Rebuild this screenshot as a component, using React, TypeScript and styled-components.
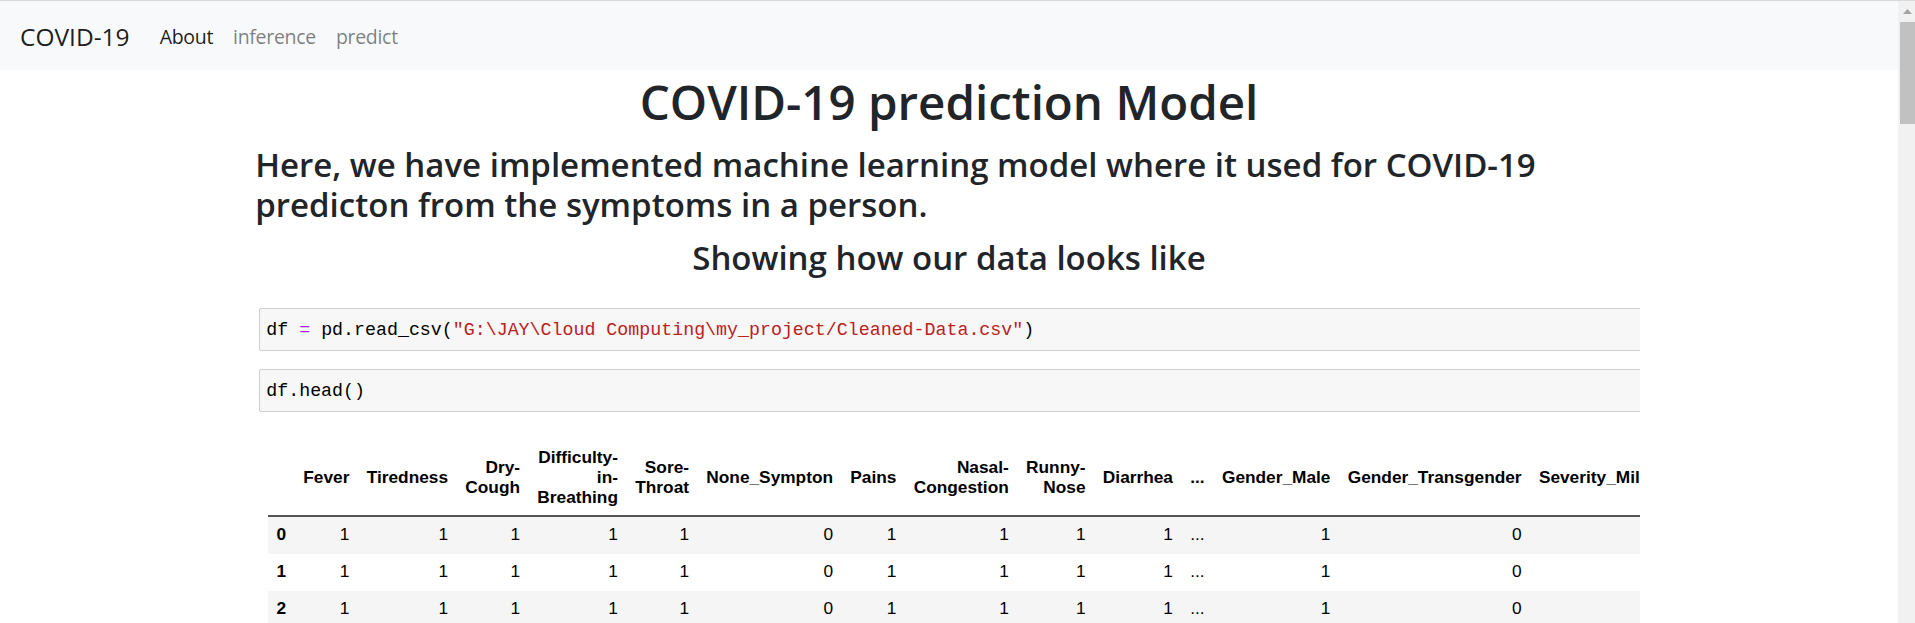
import React from "react";
import styled, { createGlobalStyle } from "styled-components";

const GlobalStyle = createGlobalStyle`
  html, body {
    margin: 0;
    padding: 0;
    height: 100%;
    overflow: hidden;
    background: #fff;
  }
  body {
    font-family: "Open Sans", "Noto Sans", Arial, sans-serif;
    color: #212529;
  }
`;

const Page = styled.div`
  display: flex;
  height: 623px;
  border-top: 1px solid #d6d8db;
  box-sizing: border-box;
  overflow: hidden;
`;

const Main = styled.div`
  flex: 1;
  min-width: 0;
  display: flex;
  flex-direction: column;
`;

const Navbar = styled.nav`
  display: flex;
  align-items: center;
  flex-shrink: 0;
  height: 69px;
  padding: 2px 20px 0;
  box-sizing: border-box;
  background: #f8f9fa;
`;

const Brand = styled.a`
  margin-right: 20px;
  font-size: 24.5px;
  color: rgba(0, 0, 0, 0.9);
  text-decoration: none;
`;

const NavLink = styled.a<{ $active?: boolean }>`
  padding: 0 10px;
  font-size: 19.5px;
  letter-spacing: -0.3px;
  color: ${(p) => (p.$active ? "rgba(0, 0, 0, 0.9)" : "rgba(0, 0, 0, 0.5)")};
  text-decoration: none;
`;

const Container = styled.div`
  width: 1425px;
  margin: 0 auto;
  padding: 0 18.75px;
  box-sizing: border-box;
`;

const Title = styled.h1`
  margin: 2px 0 0;
  font-size: 47.5px;
  font-weight: 600;
  line-height: 60px;
  text-align: center;
`;

const Lead = styled.h3`
  margin: 13px 0 0;
  font-size: 33px;
  font-weight: 600;
  line-height: 40px;
`;

const SubTitle = styled.h4`
  margin: 15px 0 0;
  font-size: 33px;
  font-weight: 600;
  line-height: 36px;
  text-align: center;
`;

const Notebook = styled.div`
  margin: 32px 3px 0 0;
  overflow: hidden;
`;

const CodeCell = styled.div`
  display: flex;
  align-items: center;
  height: 43px;
  margin: 0 -10px 0 4px;
  padding: 0 6px;
  box-sizing: border-box;
  background: #f7f7f7;
  border: 1px solid #cfcfcf;
  border-radius: 2px;
  font-family: "Liberation Mono", "DejaVu Sans Mono", monospace;
  font-size: 18.3px;
  color: #000;
  white-space: pre;

  & + & {
    margin-top: 18px;
  }
`;

const Op = styled.span`
  color: #aa22ff;
`;

const Str = styled.span`
  color: #ba2121;
`;

const DataTable = styled.table`
  margin: 26px 0 0 12.5px;
  border-collapse: collapse;
  border-spacing: 0;
  font-family: "Liberation Sans", Arial, sans-serif;
  font-size: 17.3px;
  color: #000;

  thead th {
    padding: 8.65px;
    line-height: 20px;
    font-weight: bold;
    text-align: right;
    vertical-align: middle;
    white-space: nowrap;
    border-bottom: 2px solid #555;
  }

  tbody tr:nth-child(odd) {
    background: #f5f5f5;
  }

  tbody th,
  tbody td {
    padding: 6.5px 8.65px 10.5px;
    line-height: 20px;
    text-align: right;
    white-space: nowrap;
  }

  tbody th {
    font-weight: bold;
    text-align: left;
  }
`;

const ScrollTrack = styled.div`
  display: flex;
  flex-direction: column;
  width: 17px;
  flex-shrink: 0;
  background: #f1f1f1;
`;

const ScrollArrow = styled.div`
  display: flex;
  align-items: center;
  justify-content: center;
  height: 21px;
  padding-left: 2px;
`;

const ScrollThumb = styled.div`
  height: 102px;
  margin-left: 2px;
  background: #c1c1c1;
`;

const columns: string[][] = [
  ["Fever"],
  ["Tiredness"],
  ["Dry-", "Cough"],
  ["Difficulty-", "in-", "Breathing"],
  ["Sore-", "Throat"],
  ["None_Sympton"],
  ["Pains"],
  ["Nasal-", "Congestion"],
  ["Runny-", "Nose"],
  ["Diarrhea"],
  ["..."],
  ["Gender_Male"],
  ["Gender_Transgender"],
  ["Severity_Mild"],
  ["Severity_Moderate"],
];

const rowValues = ["1", "1", "1", "1", "1", "0", "1", "1", "1", "1", "...", "1", "0", "0", "0"];

const App: React.FC = () => {
  return (
    <>
      <GlobalStyle />
      <Page>
        <Main>
          <Navbar>
            <Brand>COVID-19</Brand>
            <NavLink $active>About</NavLink>
            <NavLink>inference</NavLink>
            <NavLink>predict</NavLink>
          </Navbar>
          <Container>
            <Title>COVID-19 prediction Model</Title>
            <Lead>
              Here, we have implemented machine learning model where it used for COVID-19 predicton from the
              symptoms in a person.
            </Lead>
            <SubTitle>Showing how our data looks like</SubTitle>
            <Notebook>
              <CodeCell>
                df <Op>=</Op> pd.read_csv(
                <Str>{'"G:\\JAY\\Cloud Computing\\my_project/Cleaned-Data.csv"'}</Str>)
              </CodeCell>
              <CodeCell>df.head()</CodeCell>
              <DataTable>
                <thead>
                  <tr>
                    <th></th>
                    {columns.map((lines, i) => (
                      <th key={i}>
                        {lines.map((line, j) => (
                          <React.Fragment key={j}>
                            {j > 0 && <br />}
                            {line}
                          </React.Fragment>
                        ))}
                      </th>
                    ))}
                  </tr>
                </thead>
                <tbody>
                  {[0, 1, 2].map((r) => (
                    <tr key={r}>
                      <th>{r}</th>
                      {rowValues.map((v, i) => (
                        <td key={i}>{v}</td>
                      ))}
                    </tr>
                  ))}
                </tbody>
              </DataTable>
            </Notebook>
          </Container>
        </Main>
        <ScrollTrack>
          <ScrollArrow>
            <svg width="9" height="5" viewBox="0 0 9 5">
              <polygon points="0,5 4.5,0 9,5" fill="#a3a3a3" />
            </svg>
          </ScrollArrow>
          <ScrollThumb />
        </ScrollTrack>
      </Page>
    </>
  );
};

export default App;
